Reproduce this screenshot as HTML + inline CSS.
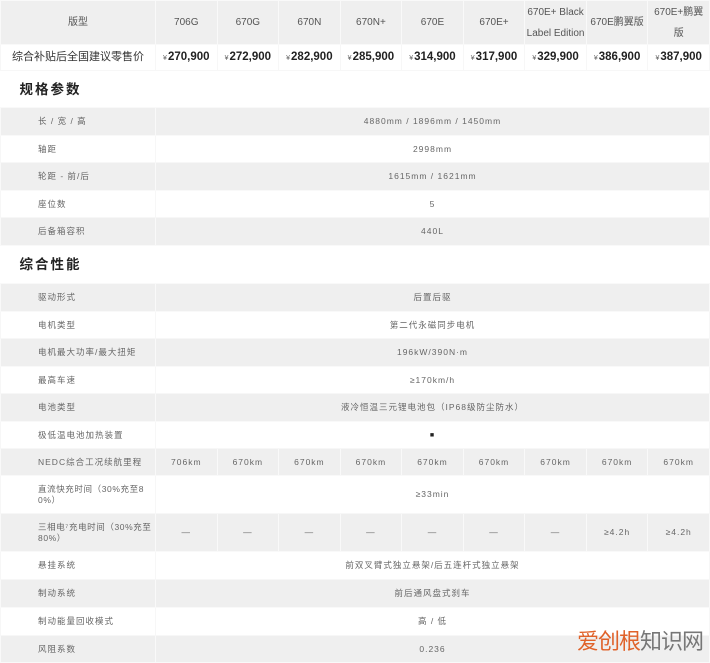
<!DOCTYPE html>
<html><head><meta charset="utf-8"><style>
*{margin:0;padding:0;box-sizing:border-box}
body{width:710px;height:661px;overflow:hidden;background:#fff;font-family:"Liberation Sans","Noto Sans CJK SC",sans-serif;position:relative}
table{border-collapse:collapse;table-layout:fixed;width:710px}
td{text-align:center;vertical-align:middle;color:#666;font-size:8.5px;letter-spacing:1px;border:1px solid #f7f7f7;overflow:hidden;padding:0;line-height:11px}
tr.g td{background:#efefef;border-color:#f9f9f9}
td.l{text-align:left;padding-left:37px}
td.n{letter-spacing:.6px;white-space:nowrap}
tr.h td{font-size:10px;color:#555;letter-spacing:0;line-height:21px}
tr.p td{font-size:11.5px;font-weight:bold;color:#222;letter-spacing:0}
tr.p td small{font-size:7px;font-weight:normal;color:#666;margin-right:1px}
tr.p td.f{font-weight:normal;font-size:11px;color:#333}
tr.s td{text-align:left;padding-left:19px;font-size:13.5px;font-weight:bold;color:#222;letter-spacing:2px;border:none;background:#fff}
.wm{position:absolute;left:577px;top:626px;font-size:22px;color:#777;font-family:"Noto Sans CJK SC",sans-serif;letter-spacing:-1px;line-height:28px}
.wm span{color:#e0622a}
</style></head><body>
<table>
<colgroup><col style="width:155px"><col><col><col><col><col><col><col><col><col></colgroup>
<tr class="g h" style="height:44px"><td>版型</td><td>706G</td><td>670G</td><td>670N</td><td>670N+</td><td>670E</td><td>670E+</td><td>670E+ Black<br>Label Edition</td><td>670E鹏翼版</td><td>670E+鹏翼<br>版</td></tr>
<tr class="p" style="height:26px"><td class="f">综合补贴后全国建议零售价</td><td><small>¥</small>270,900</td><td><small>¥</small>272,900</td><td><small>¥</small>282,900</td><td><small>¥</small>285,900</td><td><small>¥</small>314,900</td><td><small>¥</small>317,900</td><td><small>¥</small>329,900</td><td><small>¥</small>386,900</td><td><small>¥</small>387,900</td></tr>
<tr class="s" style="height:37px"><td colspan="10">规格参数</td></tr>
<tr class="g" style="height:28px"><td class="l">长 / 宽 / 高</td><td colspan="9">4880mm / 1896mm / 1450mm</td></tr>
<tr style="height:27px"><td class="l">轴距</td><td colspan="9">2998mm</td></tr>
<tr class="g" style="height:28px"><td class="l">轮距 - 前/后</td><td colspan="9">1615mm / 1621mm</td></tr>
<tr style="height:27px"><td class="l">座位数</td><td colspan="9">5</td></tr>
<tr class="g" style="height:28px"><td class="l">后备箱容积</td><td colspan="9">440L</td></tr>
<tr class="s" style="height:38px"><td colspan="10">综合性能</td></tr>
<tr class="g" style="height:28px"><td class="l">驱动形式</td><td colspan="9">后置后驱</td></tr>
<tr style="height:27px"><td class="l">电机类型</td><td colspan="9">第二代永磁同步电机</td></tr>
<tr class="g" style="height:28px"><td class="l">电机最大功率/最大扭矩</td><td colspan="9">196kW/390N·m</td></tr>
<tr style="height:27px"><td class="l">最高车速</td><td colspan="9">≥170km/h</td></tr>
<tr class="g" style="height:28px"><td class="l">电池类型</td><td colspan="9">液冷恒温三元锂电池包（IP68级防尘防水）</td></tr>
<tr style="height:27px"><td class="l">极低温电池加热装置</td><td colspan="9" style="color:#222;font-size:7px">■</td></tr>
<tr class="g" style="height:27px"><td class="l">NEDC综合工况续航里程</td><td>706km</td><td>670km</td><td>670km</td><td>670km</td><td>670km</td><td>670km</td><td>670km</td><td>670km</td><td>670km</td></tr>
<tr style="height:38px"><td class="l n">直流快充时间（30%充至8<br>0%）</td><td colspan="9">≥33min</td></tr>
<tr class="g" style="height:38px"><td class="l n">三相电⁷充电时间（30%充至<br>80%）</td><td>—</td><td>—</td><td>—</td><td>—</td><td>—</td><td>—</td><td>—</td><td>≥4.2h</td><td>≥4.2h</td></tr>
<tr style="height:28px"><td class="l">悬挂系统</td><td colspan="9">前双叉臂式独立悬架/后五连杆式独立悬架</td></tr>
<tr class="g" style="height:28px"><td class="l">制动系统</td><td colspan="9">前后通风盘式刹车</td></tr>
<tr style="height:28px"><td class="l">制动能量回收模式</td><td colspan="9">高 / 低</td></tr>
<tr class="g" style="height:27px"><td class="l">风阻系数</td><td colspan="9">0.236</td></tr>
</table>
<div class="wm"><span>爱创根</span>知识网</div>
</body></html>
